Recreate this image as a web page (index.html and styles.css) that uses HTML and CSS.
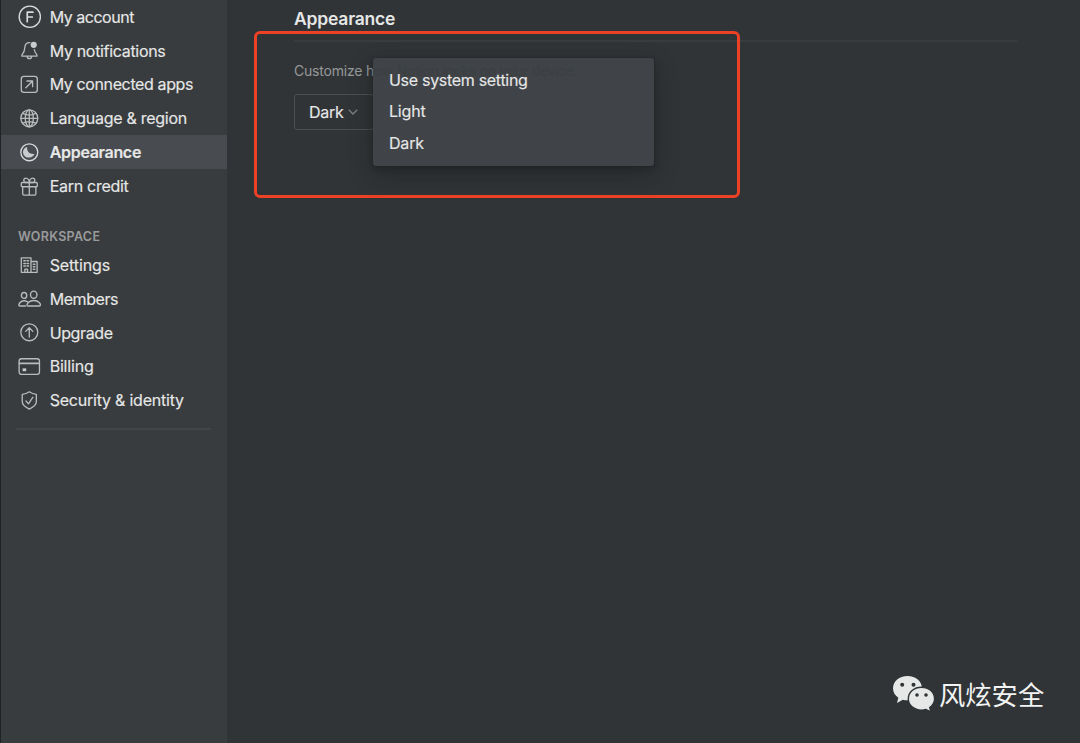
FILE: index.html
```html
<!DOCTYPE html>
<html lang="en">
<head>
<meta charset="utf-8">
<title>Appearance</title>
<link rel="stylesheet" href="styles.css">
</head>
<body>
<div class="app">
  <nav class="sidebar">
    <a class="item t-account"><svg class="icon large bright" viewBox="0 0 24 24"><circle cx="12" cy="12" r="10.8"/><path d="M9.4 17V7.3h5.8M9.4 12.2h5.2" stroke-width="1.7"/></svg><span>My account</span></a>
    <a class="item t-notif"><svg class="icon" viewBox="0 0 24 24"><path d="M12.6 3.8C8.9 3.7 7.3 6 7.2 9.300c-.1 4-1.300 5.700-3 7.600v1.300h15.900v-1.300c-1.500-1.600-2.500-3-2.800-5.700M9.700 18.500c.3 3.200 4.500 3.200 4.800 0"/><circle class="solid" cx="16.700" cy="6.200" r="3.300"/></svg><span>My notifications</span></a>
    <a class="item t-apps"><svg class="icon" viewBox="0 0 24 24"><rect x="3.500" y="3.500" width="17" height="17" rx="2.800"/><path d="M8.300 15.700l7-7M9.500 8.500h6v6"/></svg><span>My connected apps</span></a>
    <a class="item t-lang"><svg class="icon" viewBox="0 0 24 24"><circle cx="12" cy="12" r="9"/><ellipse cx="12" cy="12" rx="4.300" ry="9"/><path d="M12 3v18M3 12h18M5 6.800c4 2 10 2 14 0M5 17.200c4-2 10-2 14 0"/></svg><span>Language &amp; region</span></a>
    <a class="item active t-appear"><svg class="icon bright" viewBox="0 0 24 24"><circle cx="12" cy="12" r="9"/><path class="solid" d="M9.700 6.300c-.5 4.700 2.400 7.800 7.800 7.400-1 2.300-3 3.700-5.300 3.700A5.600 5.600 0 0 1 9.700 6.300z"/></svg><span>Appearance</span></a>
    <a class="item t-earn"><svg class="icon" viewBox="0 0 24 24"><rect x="3.500" y="8" width="17" height="4.500" rx="1"/><path d="M5 12.500V20c0 .8.500 1.300 1.300 1.300h11.400c.8 0 1.300-.5 1.300-1.300v-7.500M12 8v13.300M12 8H8.200C5.500 8 5.500 3.300 8.300 3.300 10.500 3.300 12 5.500 12 8zM12 8h3.800c2.700 0 2.700-4.700-.1-4.700C13.500 3.300 12 5.500 12 8z"/></svg><span>Earn credit</span></a>
    <h2 class="group">WORKSPACE</h2>
    <a class="item t-set"><svg class="icon" viewBox="0 0 24 24"><path d="M3.500 19.500V4.200h10.300v15.300zM13.800 8h6.500v11.500h-6.500M7.300 19.300v-3.200h2.800v3.200"/><path d="M6.200 7.200h1.600M9.600 7.200h1.600M6.200 10h1.600M9.600 10h1.600M6.200 12.800h1.600M9.600 12.800h1.600M16.300 10.800h1.600M16.300 13.500h1.600M16.300 16.200h1.600" stroke-width="1.600"/></svg><span>Settings</span></a>
    <a class="item t-mem"><svg class="icon large" viewBox="0 0 24 24"><ellipse cx="6.200" cy="8.600" rx="2.700" ry="3"/><ellipse cx="16" cy="7.800" rx="3.300" ry="3.600"/><path d="M7.700 19.300H1.800c-1.500 0-1-2.500.8-3.900 1.900-1.400 4.900-1.600 7-.4M10.300 19.300c-1.700 0-1.300-2.200.2-3.600 2.700-2.700 8.300-2.700 11 0 1.500 1.400 1.900 3.600.2 3.600z"/></svg><span>Members</span></a>
    <a class="item t-up"><svg class="icon" viewBox="0 0 24 24"><circle cx="12" cy="12" r="9"/><path d="M12 17V7.500M8.200 11L12 7.200l3.800 3.800"/></svg><span>Upgrade</span></a>
    <a class="item t-bill"><svg class="icon" viewBox="0 0 24 24"><rect x="1.200" y="4" width="21.600" height="16.600" rx="2.500"/><path d="M1.500 8.900h21" stroke-width="2"/><rect class="solid" x="4.900" y="14.200" width="3.800" height="3"/></svg><span>Billing</span></a>
    <a class="item t-sec"><svg class="icon" viewBox="0 0 24 24"><path d="M12 3c2 1.500 4.500 2.500 7.500 2.800v7.400c0 3.600-3.200 6-7.500 8.100-4.300-2.100-7.500-4.500-7.500-8.100V5.800C7.500 5.500 10 4.500 12 3zM8.500 12.800l2.600 3 4.600-7"/></svg><span>Security &amp; identity</span></a>
    <hr class="sep">
  </nav>
  <main class="content">
    <h1 class="title">Appearance</h1>
    <p class="hint">Customize h<span class="dim">ow Notion looks on your device.</span></p>
    <button class="select"><span>Dark</span><svg class="chev" viewBox="0 0 10 6"><path d="M.8.8L5 5 9.200.8"/></svg></button>
  </main>
  <div class="callout"></div>
  <div class="menu">
    <div class="option o-sys">Use system setting</div>
    <div class="option">Light</div>
    <div class="option">Dark</div>
  </div>
  <div class="mark">
    <svg class="wechat" viewBox="0 0 44 38"><path d="M15.500 1C7.300 1 1 6.400 1 13.300c0 4 2 7.200 5.300 9.500L5 28l5.800-3.300c1.600.4 3.100.6 4.700.6C23.700 25.300 30 20 30 13.300 30 6.400 23.700 1 15.500 1z"/><path class="front" d="M29.500 12.200c-7.400 0-13.200 5-13.200 11.500s5.800 11.400 13.200 11.400c1.600 0 3-.2 4.300-.6l5.200 2.500-1.300-4.500c3-2.100 4.900-5.200 4.900-8.800 0-6.500-5.700-11.500-13.100-11.500z"/><g class="eyes"><circle cx="10.200" cy="9.700" r="2"/><circle cx="21.500" cy="9.700" r="2"/><circle cx="25" cy="20" r="1.800"/><circle cx="34" cy="20" r="1.800"/></g></svg>
    <span>风炫安全</span>
  </div>
</div>
</body>
</html>
```
FILE: styles.css
```css
* { box-sizing: border-box; }
body { margin: 0; background: #303436; font-family: Inter, "Liberation Sans", sans-serif; color: #e6e7e7; }
.app { position: relative; display: flex; width: 1080px; height: 743px; overflow: hidden; }
.sidebar { width: 227px; border-left: 1px solid #202325; background: #393c3e; }
.item { display: flex; align-items: center; height: 33.8px; padding-left: 16.500px; gap: 8px; font-size: 16px; white-space: nowrap; }
.item span, .option, .select span { -webkit-text-stroke: .15px currentColor; }
.t-account { letter-spacing: -.48px; }
.t-notif { letter-spacing: -.32px; }
.t-apps { letter-spacing: -.38px; }
.t-lang { letter-spacing: -.28px; }
.t-appear { letter-spacing: -.3px; }
.t-earn { letter-spacing: -.28px; }
.t-set { letter-spacing: -.1px; }
.t-mem { letter-spacing: -.42px; }
.t-up { letter-spacing: -.38px; }
.t-bill { letter-spacing: -.2px; }
.t-sec { letter-spacing: -.22px; }
.active { background: #484b4f; font-weight: 600; }
.icon { width: 22.600px; height: 22.600px; margin: 0 .7px 0 .9px; flex: none; fill: none; stroke: #b9bbbc; stroke-width: 1.4; stroke-linejoin: round; stroke-linecap: round; }
.icon.large { width: 23.600px; height: 23.600px; margin: 0 .2px 0 .4px; }
.bright { stroke: #d9dadb; }
.icon .solid { fill: #c9cbcc; stroke: none; }
.group { margin: 0; height: 45.400px; padding: 26px 0 0 17px; font-size: 12.500px; line-height: 16px; font-weight: 600; letter-spacing: .3px; color: #999b9d; }
.sep { width: 195px; height: 2px; margin: 11px 0 0 15px; border: 0; background: #434648; }
.content { flex: 1; padding: 0 63px 0 67px; }
.title { margin: 0; height: 42px; padding-top: 8px; border-bottom: 2px solid #383c3e; font-size: 17.500px; line-height: 21px; font-weight: 600; letter-spacing: -.2px; }
.hint { margin: 20px 0 0; font-size: 14px; line-height: 18px; letter-spacing: -.2px; white-space: nowrap; color: #96989a; }
.dim { position: relative; z-index: 2; letter-spacing: -.28px; color: #3b4042; }
.select { display: flex; align-items: center; gap: 5px; width: 80px; height: 36px; margin-top: 13.500px; padding: 0 0 0 14px; border: 1px solid #4b4f51; border-radius: 3px; background: none; color: #e6e7e7; font: 16px Inter, sans-serif; letter-spacing: -.3px; }
.chev { width: 10px; height: 6px; fill: none; stroke: #7d8082; stroke-width: 1.3; }
.callout { position: absolute; left: 254px; top: 31px; width: 486px; height: 167px; border: 3px solid #ec4125; border-radius: 6px; }
.menu { position: absolute; left: 373px; top: 57.500px; width: 281px; height: 108.500px; padding: 7px 16px; border-radius: 3px; background: #404347; box-shadow: 0 0 0 1px rgba(20,22,23,.12), 0 3px 6px rgba(15,15,15,.2), 0 9px 24px rgba(15,15,15,.3); }
.option { position: relative; z-index: 3; height: 31.700px; line-height: 31.700px; font-size: 16px; letter-spacing: -.2px; white-space: nowrap; }
.o-sys { letter-spacing: -.3px; }
.mark { position: absolute; left: 892px; top: 675px; display: flex; align-items: center; gap: 3px; font: 26.300px/38px "Noto Sans CJK SC", sans-serif; color: #f2f3f3; }
.wechat { width: 44px; height: 38px; fill: #e6e8e7; }
.front { stroke: #303436; stroke-width: 1.400; }
.eyes { fill: #303436; }
```
